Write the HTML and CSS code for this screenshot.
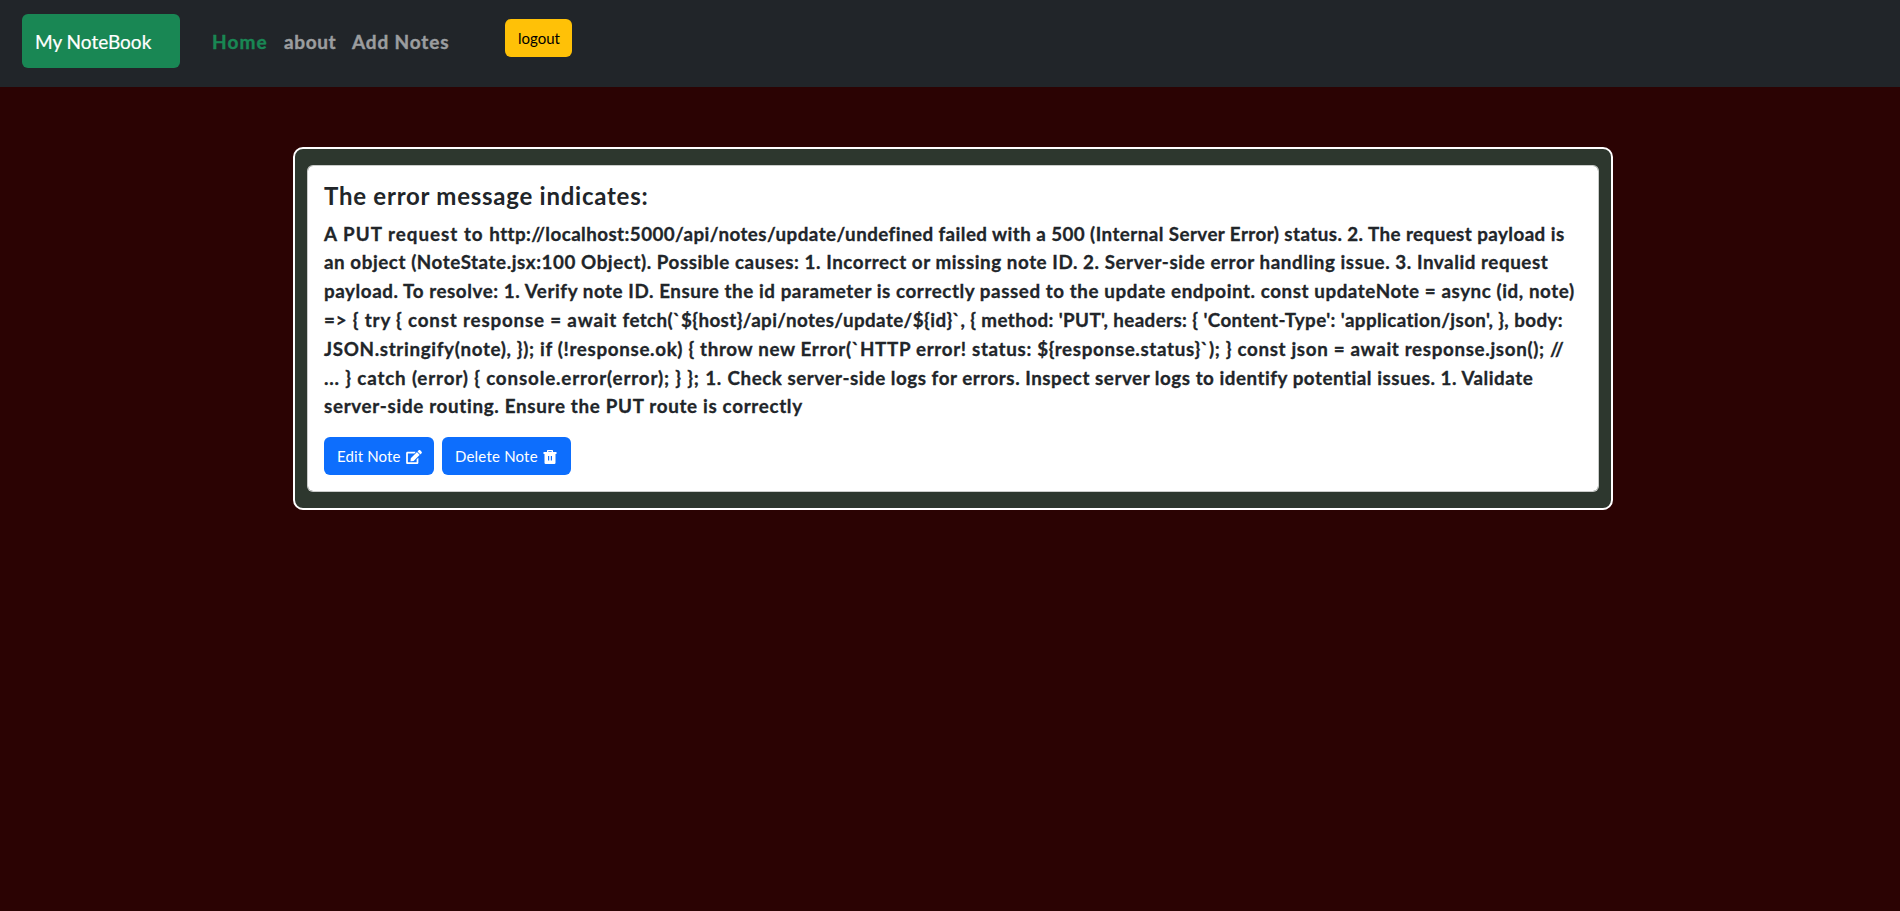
FILE: index.html
```html
<!DOCTYPE html>
<html lang="en">
<head>
<meta charset="utf-8">
<title>My NoteBook</title>
<link rel="stylesheet" href="styles.css">
</head>
<body>
<nav class="navbar">
  <a class="brand">My NoteBook</a>
  <div class="links">
    <a class="link active">Home</a>
    <a class="link about">about</a>
    <a class="link add">Add Notes</a>
  </div>
  <button class="btn logout">logout</button>
</nav>
<main class="notes">
  <article class="card">
    <h5 class="title">The error message indicates:</h5>
    <p class="text">
      <span class="line l1"><span class="lead">A PUT request to </span>http://localhost:5000/api/notes/update/undefined failed with a 500 (Internal Server Error) status. 2. The request payload is</span>
      <span class="line l2">an object (NoteState.jsx:100 Object). Possible causes: 1. Incorrect or missing note ID. 2. Server-side error handling issue. 3. Invalid request</span>
      <span class="line l3">payload. To resolve: 1. Verify note ID. Ensure the id parameter is correctly passed to the update endpoint. const updateNote = async (id, note)</span>
      <span class="line l4"><span class="lead">=&gt; { try { const response = await </span>fetch(`${host}/api/notes/update/${id}`, { method: 'PUT', headers: { 'Content-Type': 'application/json', }, body:</span>
      <span class="line l5">JSON.stringify(note), }); if (!response.ok) { throw new Error(`HTTP error! status: ${response.status}`); } const json = await response.json(); //</span>
      <span class="line l6"><span class="lead">... } catch (error) { console.error(error); } }; 1. </span>Check server-side logs for errors. Inspect server logs to identify potential issues. 1. Validate</span>
      <span class="line l7">server-side routing. Ensure the PUT route is correctly</span>
    </p>
    <div class="actions">
      <button class="btn primary edit">Edit Note
        <svg class="icon" viewBox="0 0 576 512" width="16" height="14"><path fill="currentColor" d="M402.600 83.200l90.200 90.200c3.800 3.800 3.800 10 0 13.800L274.400 405.600l-92.800 10.300c-12.400 1.400-22.900-9.100-21.500-21.500l10.300-92.800L388.800 83.200c3.800-3.800 10-3.800 13.800 0zm162-22.900l-48.800-48.800c-15.200-15.200-39.900-15.200-55.200 0l-35.400 35.400c-3.800 3.800-3.800 10 0 13.800l90.200 90.200c3.800 3.800 10 3.800 13.800 0l35.400-35.400c15.200-15.300 15.200-40 0-55.200zM384 346.200V448H64V128h229.800c3.200 0 6.200-1.300 8.500-3.500l40-40c7.600-7.600 2.200-20.500-8.500-20.500H48C21.500 64 0 85.500 0 112v352c0 26.500 21.500 48 48 48h352c26.500 0 48-21.500 48-48V306.200c0-10.700-12.900-16-20.500-8.500l-40 40c-2.200 2.300-3.500 5.300-3.500 8.500z"/></svg>
      </button>
      <button class="btn primary delete">Delete Note
        <svg class="icon" viewBox="0 0 14 14" width="14" height="14"><path fill="currentColor" fill-rule="evenodd" d="M4 2V.8Q4 0 4.800 0h4.400Q10 0 10 .8V2h3.500v2H12.500v8.800q0 1.200-1.200 1.200H2.700q-1.200 0-1.200-1.200V4H.5V2zM5.300 1.200V2h3.400v-.8zM5 6V10.500H6.200V6zM7.800 6V10.500H9V6z"/></svg>
      </button>
    </div>
  </article>
</main>
</body>
</html>
```
FILE: styles.css
```css
* { box-sizing: border-box; }
body { margin: 0; background: #2b0303; font-family: Lato, sans-serif; color: #212529; }

.navbar { display: flex; align-items: flex-start; height: 87px; background: #212529; padding: 14px 22px; }
.brand { width: 158px; height: 54px; background: #198754; border-radius: 6px; color: #fff; font-size: 19px; font-weight: 400; line-height: 55px; padding-left: 13px; -webkit-text-stroke: 0.2px; }
.links { display: flex; width: 292px; padding-left: 32px; color: #9b9d9f; font-size: 19px; font-weight: 700; line-height: 55px; white-space: nowrap; -webkit-text-stroke: 0.4px; }
.link { flex: none; }
.active { width: 72px; color: #198754; letter-spacing: 1.1px; }
.about { width: 68px; letter-spacing: 0.6px; }
.add { letter-spacing: 0.85px; }

.btn { display: flex; align-items: center; height: 38px; border: 0; border-radius: 6px; padding: 0 13px; font: 400 15px/38px Lato, sans-serif; white-space: nowrap; }
.logout { width: 67px; margin: 5px 0 0 33px; background: #ffc107; color: #000; }
.primary { background: #0d6efd; color: #fff; gap: 5px; }
.edit { width: 110px; letter-spacing: 0.13px; }
.delete { width: 129px; letter-spacing: 0.2px; }
.icon { flex: none; margin-top: 2px; }
.actions { display: flex; gap: 8px; }

.notes { width: 1320px; margin: 60px 0 0 293px; padding: 16px 12px; border: 2px solid #fff; border-radius: 10px; background: #2d372e; }
.card { background: #fff; background-clip: padding-box; border: 1px solid rgba(255, 255, 255, 0.75); border-radius: 6px; padding: 16px; }
.title { margin: 0 0 8px; font-size: 24px; line-height: 27px; padding-bottom: 2.6px; letter-spacing: 0.75px; }
.text { margin: 0 0 15.400px; font-size: 18.8px; font-weight: 700; line-height: 28.8px; -webkit-text-stroke: 0.3px; }
.line { display: block; white-space: nowrap; }
.l1 { letter-spacing: 0.43px; }
.l1 .lead { letter-spacing: 1.02px; }
.l2 { letter-spacing: 0.56px; }
.l3 { letter-spacing: 0.57px; }
.l4 { letter-spacing: 0.4px; }
.l4 .lead { letter-spacing: 0.82px; }
.l5 { letter-spacing: 0.66px; }
.l6 { letter-spacing: 0.53px; }
.l6 .lead { letter-spacing: 0.84px; }
.l7 { letter-spacing: 0.68px; }
```
